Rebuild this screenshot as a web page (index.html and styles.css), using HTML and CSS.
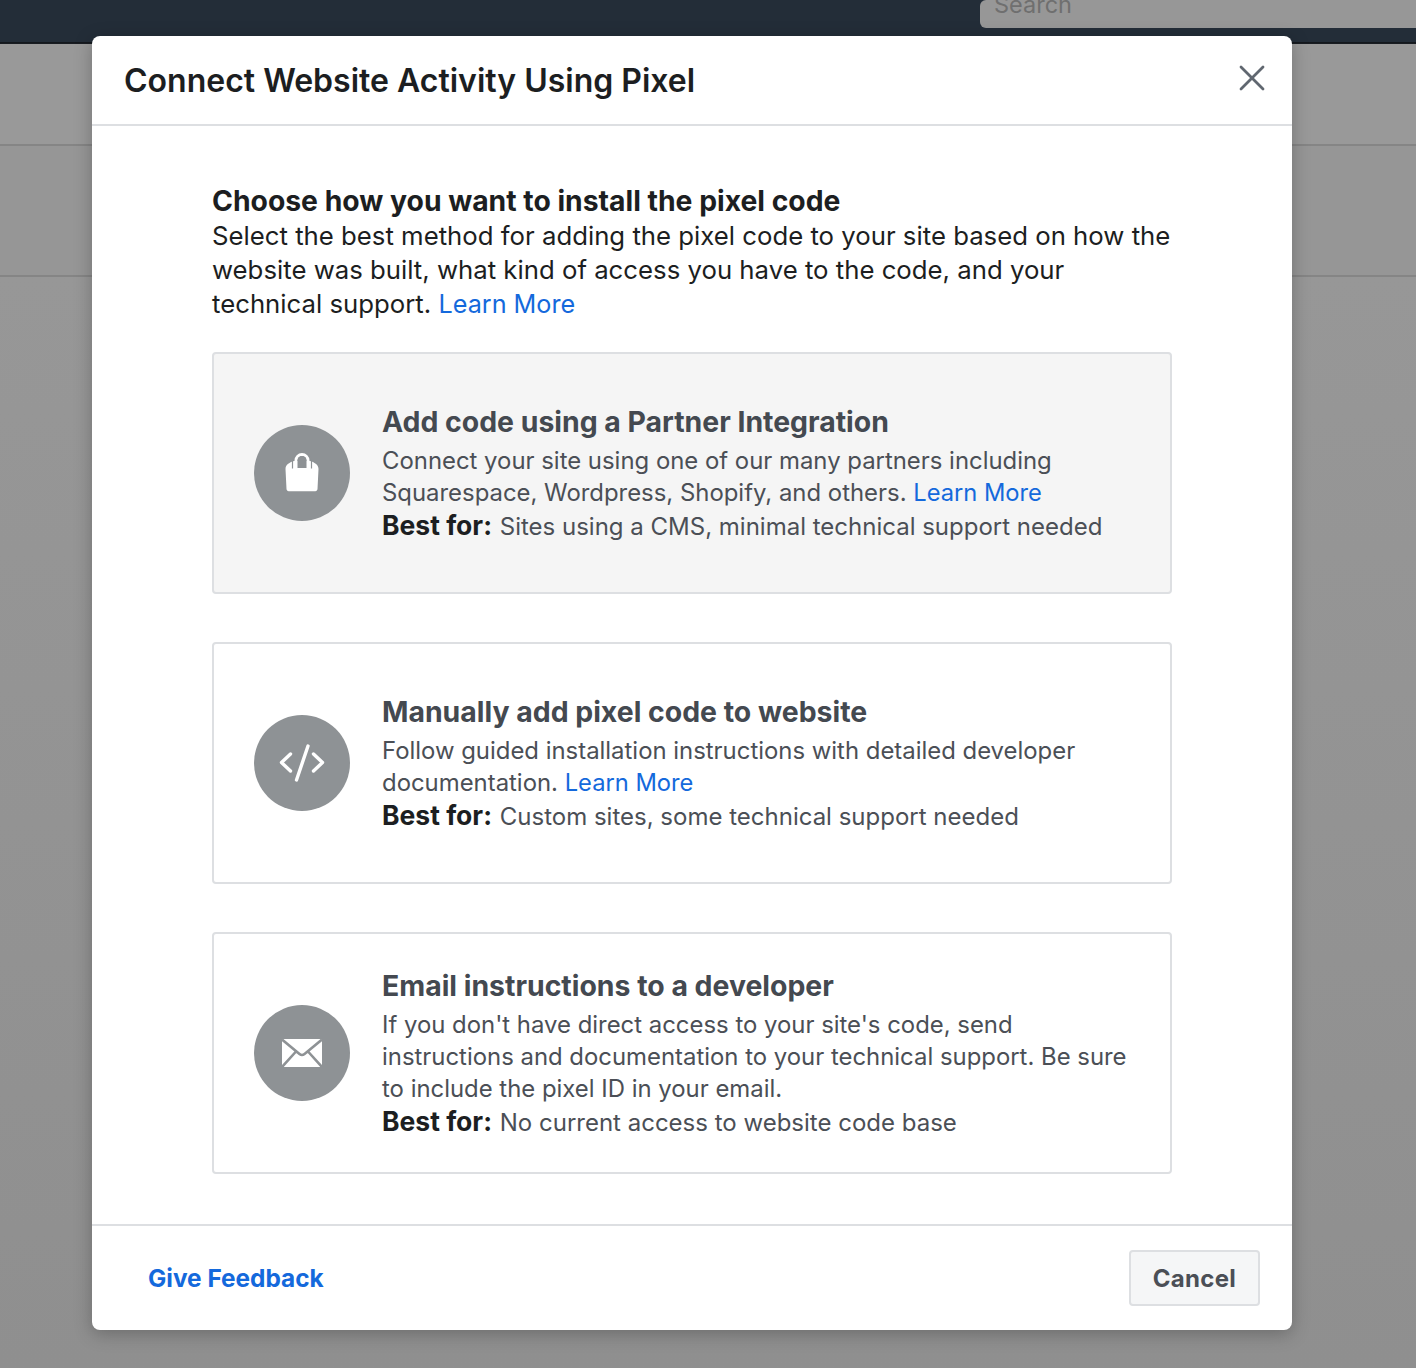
FILE: index.html
```html
<!DOCTYPE html>
<html lang="en">
<head>
    <meta charset="UTF-8">
    <title>Connect Website Activity Using Pixel</title>
    <link rel="stylesheet" href="styles.css">
</head>
<body>
<div class="topbar">
    <div class="search">Search</div>
</div>
<div class="page-header"></div>
<div class="page-subheader"></div>
<div class="page-rest"></div>

<div class="modal">
    <div class="modal-head">
        <h1>Connect Website Activity Using Pixel</h1>
        <svg class="close" width="28" height="28" viewBox="0 0 28 28" fill="none" stroke="#606770" stroke-width="2.8" stroke-linecap="round">
            <path d="M3 3l22 22"/>
            <path d="M25 3L3 25"/>
        </svg>
    </div>
    <div class="modal-body">
        <h2>Choose how you want to install the pixel code</h2>
        <p class="intro">Select the best method for adding the pixel code to your site based on how the website was built, what kind of access you have to the code, and your technical support. <a href="#">Learn More</a></p>

        <div class="option option-active">
            <div class="option-icon">
                <svg width="36" height="40" viewBox="0 0 36 40" fill="#fff">
                    <path d="M1.500 16C1.500 12 5 9.500 10 8h16c5 1.500 8.500 4 8.500 8l-1 20c0 1.200-1 2.200-2.200 2.200H4.700c-1.200 0-2.200-1-2.200-2.200z"/>
                    <path d="M8.500 15.500V8a9.500 8.500 0 0 1 19 0v7.500" fill="none" stroke="#8e9295" stroke-width="1.200"/>
                    <path d="M12 16V7.500a6 6 0 0 1 12 0V16" fill="none" stroke="#fff" stroke-width="3"/>
                    <path d="M13.500 15V7.500a4.500 4.500 0 0 1 9 0V15z" fill="#8e9295"/>
                </svg>
            </div>
            <div class="option-text">
                <h3>Add code using a Partner Integration</h3>
                <p>Connect your site using one of our many partners including Squarespace, Wordpress, Shopify, and others. <a href="#">Learn More</a></p>
                <p class="best"><b>Best for:</b> Sites using a CMS, minimal technical support needed</p>
            </div>
        </div>

        <div class="option">
            <div class="option-icon">
                <svg width="46" height="38" viewBox="0 0 46 38" fill="none" stroke="#fff" stroke-width="3.400" stroke-linecap="round" stroke-linejoin="round">
                    <path d="M11.500 10L2.500 18.500l9 8.500"/>
                    <path d="M34.500 10l9 8.500-9 8.500"/>
                    <path d="M29 2L17.500 36"/>
                </svg>
            </div>
            <div class="option-text">
                <h3>Manually add pixel code to website</h3>
                <p>Follow guided installation instructions with detailed developer documentation. <a href="#">Learn More</a></p>
                <p class="best"><b>Best for:</b> Custom sites, some technical support needed</p>
            </div>
        </div>

        <div class="option">
            <div class="option-icon">
                <svg width="40" height="28" viewBox="0 0 40 28">
                    <rect width="40" height="28" rx="1.500" fill="#fff"/>
                    <path d="M0 .5l17.500 14.500q2.500 2 5 0L40 .5M0 28l14-15.500M40 28L26 12.500" fill="none" stroke="#8e9295" stroke-width="2.600"/>
                </svg>
            </div>
            <div class="option-text">
                <h3>Email instructions to a developer</h3>
                <p>If you don't have direct access to your site's code, send instructions and documentation to your technical support. Be sure to include the pixel ID in your email.</p>
                <p class="best"><b>Best for:</b> No current access to website code base</p>
            </div>
        </div>
    </div>
    <div class="modal-foot">
        <a class="feedback" href="#">Give Feedback</a>
        <button class="btn">Cancel</button>
    </div>
</div>
</body>
</html>
```

FILE: styles.css
```css
* {
    margin: 0;
    padding: 0;
    box-sizing: border-box;
}

body {
    font-family: Inter, "Liberation Sans", sans-serif;
    background: #969696;
    height: 1368px;
    overflow: hidden;
    position: relative;
}

a {
    color: #1469dc;
    text-decoration: none;
}

/* page behind the dialog */
.topbar {
    height: 44px;
    background: #232d38;
    border-bottom: 2px solid #14181d;
    padding-left: 980px;
}

.search {
    height: 28px;
    background: #979797;
    border-radius: 6px 0 0 6px;
    color: #6f6f6f;
    font-size: 23.5px;
    line-height: 10px;
    padding-left: 14px;
    overflow: hidden;
}

.page-header {
    height: 102px;
    background: #999;
    border-bottom: 2px solid #858585;
    box-shadow: 0 2px 3px #8a8a8a;
}

.page-subheader {
    height: 131px;
    background: #969696;
    border-bottom: 2px solid #858585;
}

.page-rest {
    height: 1091px;
    background: linear-gradient(#979797, #8f8f8f);
}

/* dialog */
.modal {
    position: absolute;
    left: 92px;
    top: 36px;
    width: 1200px;
    height: 1294px;
    background: #fff;
    border-radius: 8px;
    box-shadow: 0 4px 18px rgba(0, 0, 0, 0.25);
    display: flex;
    flex-direction: column;
}

.modal-head {
    height: 90px;
    border-bottom: 2px solid #dddfe2;
    padding: 0 26px 0 32px;
    display: flex;
    justify-content: space-between;
    align-items: flex-start;
}

.modal-head h1 {
    font-size: 32px;
    font-weight: 640;
    line-height: 40px;
    color: #1c1e21;
    margin-top: 25px;
}

.close {
    margin-top: 28px;
}

.modal-body {
    flex: 1;
    padding: 57px 120px 0;
}

.modal-body h2 {
    font-size: 28.3px;
    font-weight: 700;
    line-height: 36px;
    color: #1c1e21;
}

.intro {
    font-size: 25.75px;
    line-height: 34px;
    color: #1c1e21;
    margin-bottom: 31px;
}

.intro a {
    font-size: 25.2px;
}

.option {
    height: 242px;
    border: 2px solid #dddfe2;
    border-radius: 4px;
    padding: 0 30px 0 40px;
    margin-bottom: 48px;
    display: flex;
    align-items: center;
    gap: 32px;
}

.option-active {
    background: #f5f5f5;
}

.option-icon {
    width: 96px;
    height: 96px;
    flex: none;
    border-radius: 50%;
    background: #8e9295;
    display: flex;
    align-items: center;
    justify-content: center;
}

.option-text {
    color: #4b4f56;
    font-size: 23.9px;
    line-height: 32px;
    padding-bottom: 1px;
}

.option-text a {
    font-size: 23.7px;
}

.option-text h3 {
    font-size: 28.4px;
    font-weight: 700;
    line-height: 39px;
    color: #444950;
    margin-bottom: 4px;
}

.best {
    color: #4b4f56;
    font-size: 24px;
    line-height: 33px;
}

.best b {
    font-size: 26.5px;
    font-weight: 700;
    margin-right: 1px;
    color: #1c1e21;
}

.modal-foot {
    height: 106px;
    border-top: 2px solid #dddfe2;
    padding: 24px 32px 0 56px;
    display: flex;
    justify-content: space-between;
    align-items: flex-start;
}

.feedback {
    font-size: 24.4px;
    font-weight: 700;
    line-height: 56px;
}

.btn {
    width: 131px;
    height: 56px;
    background: #f5f6f7;
    border: 2px solid #dddfe2;
    border-radius: 4px;
    color: #4b4f56;
    font-family: inherit;
    font-size: 24px;
    font-weight: 700;
    letter-spacing: 0.3px;
}
```
